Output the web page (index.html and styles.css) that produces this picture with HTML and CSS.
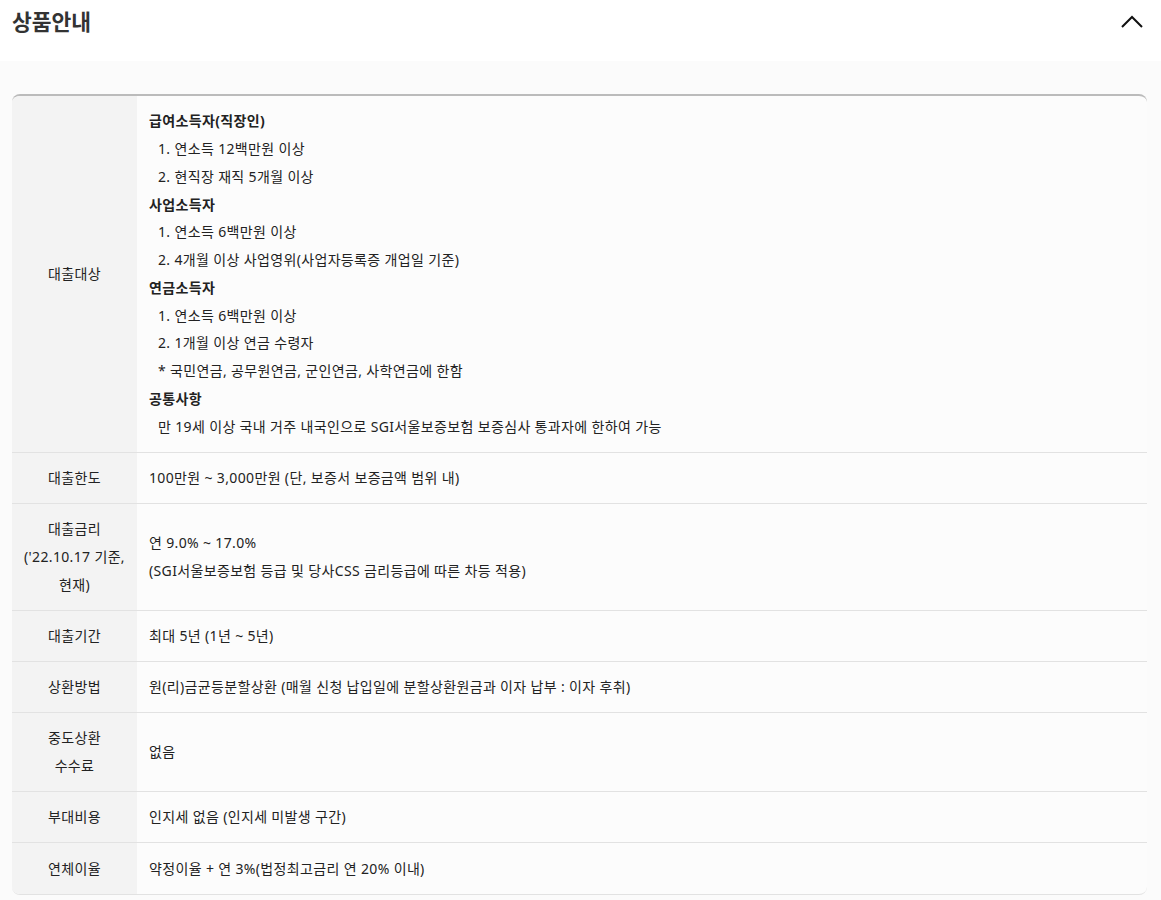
FILE: index.html
```html
<!DOCTYPE html>
<html lang="ko">
<head>
<meta charset="utf-8">
<title>상품안내</title>
<link rel="stylesheet" href="styles.css">
</head>
<body>
<header class="head">
  <h2 class="title">상품안내</h2>
  <button class="toggle" aria-label="접기">
    <svg width="22" height="14" viewBox="0 0 22 14"><path d="M1 12 L11 2 L21 12" fill="none" stroke="#111" stroke-width="2"/></svg>
  </button>
</header>
<section class="body">
  <div class="card">
    <table class="info">
      <tr>
        <th>대출대상</th>
        <td>
          <p class="sub">급여소득자(직장인)</p>
          <p class="item">1. 연소득 12백만원 이상</p>
          <p class="item">2. 현직장 재직 5개월 이상</p>
          <p class="sub">사업소득자</p>
          <p class="item">1. 연소득 6백만원 이상</p>
          <p class="item">2. 4개월 이상 사업영위(사업자등록증 개업일 기준)</p>
          <p class="sub">연금소득자</p>
          <p class="item">1. 연소득 6백만원 이상</p>
          <p class="item">2. 1개월 이상 연금 수령자</p>
          <p class="item">* 국민연금, 공무원연금, 군인연금, 사학연금에 한함</p>
          <p class="sub">공통사항</p>
          <p class="item">만 19세 이상 국내 거주 내국인으로 SGI서울보증보험 보증심사 통과자에 한하여 가능</p>
        </td>
      </tr>
      <tr>
        <th>대출한도</th>
        <td>100만원 ~ 3,000만원 (단, 보증서 보증금액 범위 내)</td>
      </tr>
      <tr>
        <th>대출금리<br>('22.10.17 기준, 현재)</th>
        <td>연 9.0% ~ 17.0%<br>(SGI서울보증보험 등급 및 당사CSS 금리등급에 따른 차등 적용)</td>
      </tr>
      <tr>
        <th>대출기간</th>
        <td>최대 5년 (1년 ~ 5년)</td>
      </tr>
      <tr>
        <th>상환방법</th>
        <td>원(리)금균등분할상환 (매월 신청 납입일에 분할상환원금과 이자 납부 : 이자 후취)</td>
      </tr>
      <tr>
        <th>중도상환<br>수수료</th>
        <td>없음</td>
      </tr>
      <tr>
        <th>부대비용</th>
        <td>인지세 없음 (인지세 미발생 구간)</td>
      </tr>
      <tr>
        <th>연체이율</th>
        <td>약정이율 + 연 3%(법정최고금리 연 20% 이내)</td>
      </tr>
    </table>
  </div>
</section>
</body>
</html>
```

FILE: styles.css
```css
* { box-sizing: border-box; }
html, body { margin: 0; padding: 0; }
body {
  font-family: "Noto Sans", "Noto Sans CJK KR", sans-serif;
  color: #222;
  background: #fbfbfb;
}
.head {
  background: #fff;
  height: 61px;
  display: flex;
  align-items: flex-start;
  justify-content: space-between;
  padding: 0 18px 0 12px;
}
.title {
  margin: 6px 0 0;
  font-size: 21.5px;
  font-weight: 700;
  color: #333;
  line-height: 32px;
}
.toggle {
  border: 0;
  background: none;
  padding: 0;
  margin-top: 15px;
  width: 22px;
  height: 14px;
  display: block;
}
.toggle svg { display: block; }
.body {
  padding: 33px 14px 40px 12px;
}
.card {
  border-top: 2px solid #bbb;
  border-bottom: 1px solid #e2e2e2;
  border-radius: 8px;
  overflow: hidden;
  background: #fcfcfc;
}
.info {
  width: 100%;
  border-collapse: collapse;
  font-size: 14px;
  letter-spacing: 0.35px;
  line-height: 27.75px;
}
.info th {
  width: 125px;
  background: #f3f3f3;
  font-weight: 400;
  text-align: center;
  vertical-align: middle;
  padding: 11.25px 8px;
}
.info td {
  padding: 11.25px 12px;
  vertical-align: middle;
  text-align: left;
}
.info tr + tr th,
.info tr + tr td {
  border-top: 1px solid #e2e2e2;
}
.info p { margin: 0; }
.info .sub { font-weight: 700; }
.info .item { padding-left: 9px; }
```
